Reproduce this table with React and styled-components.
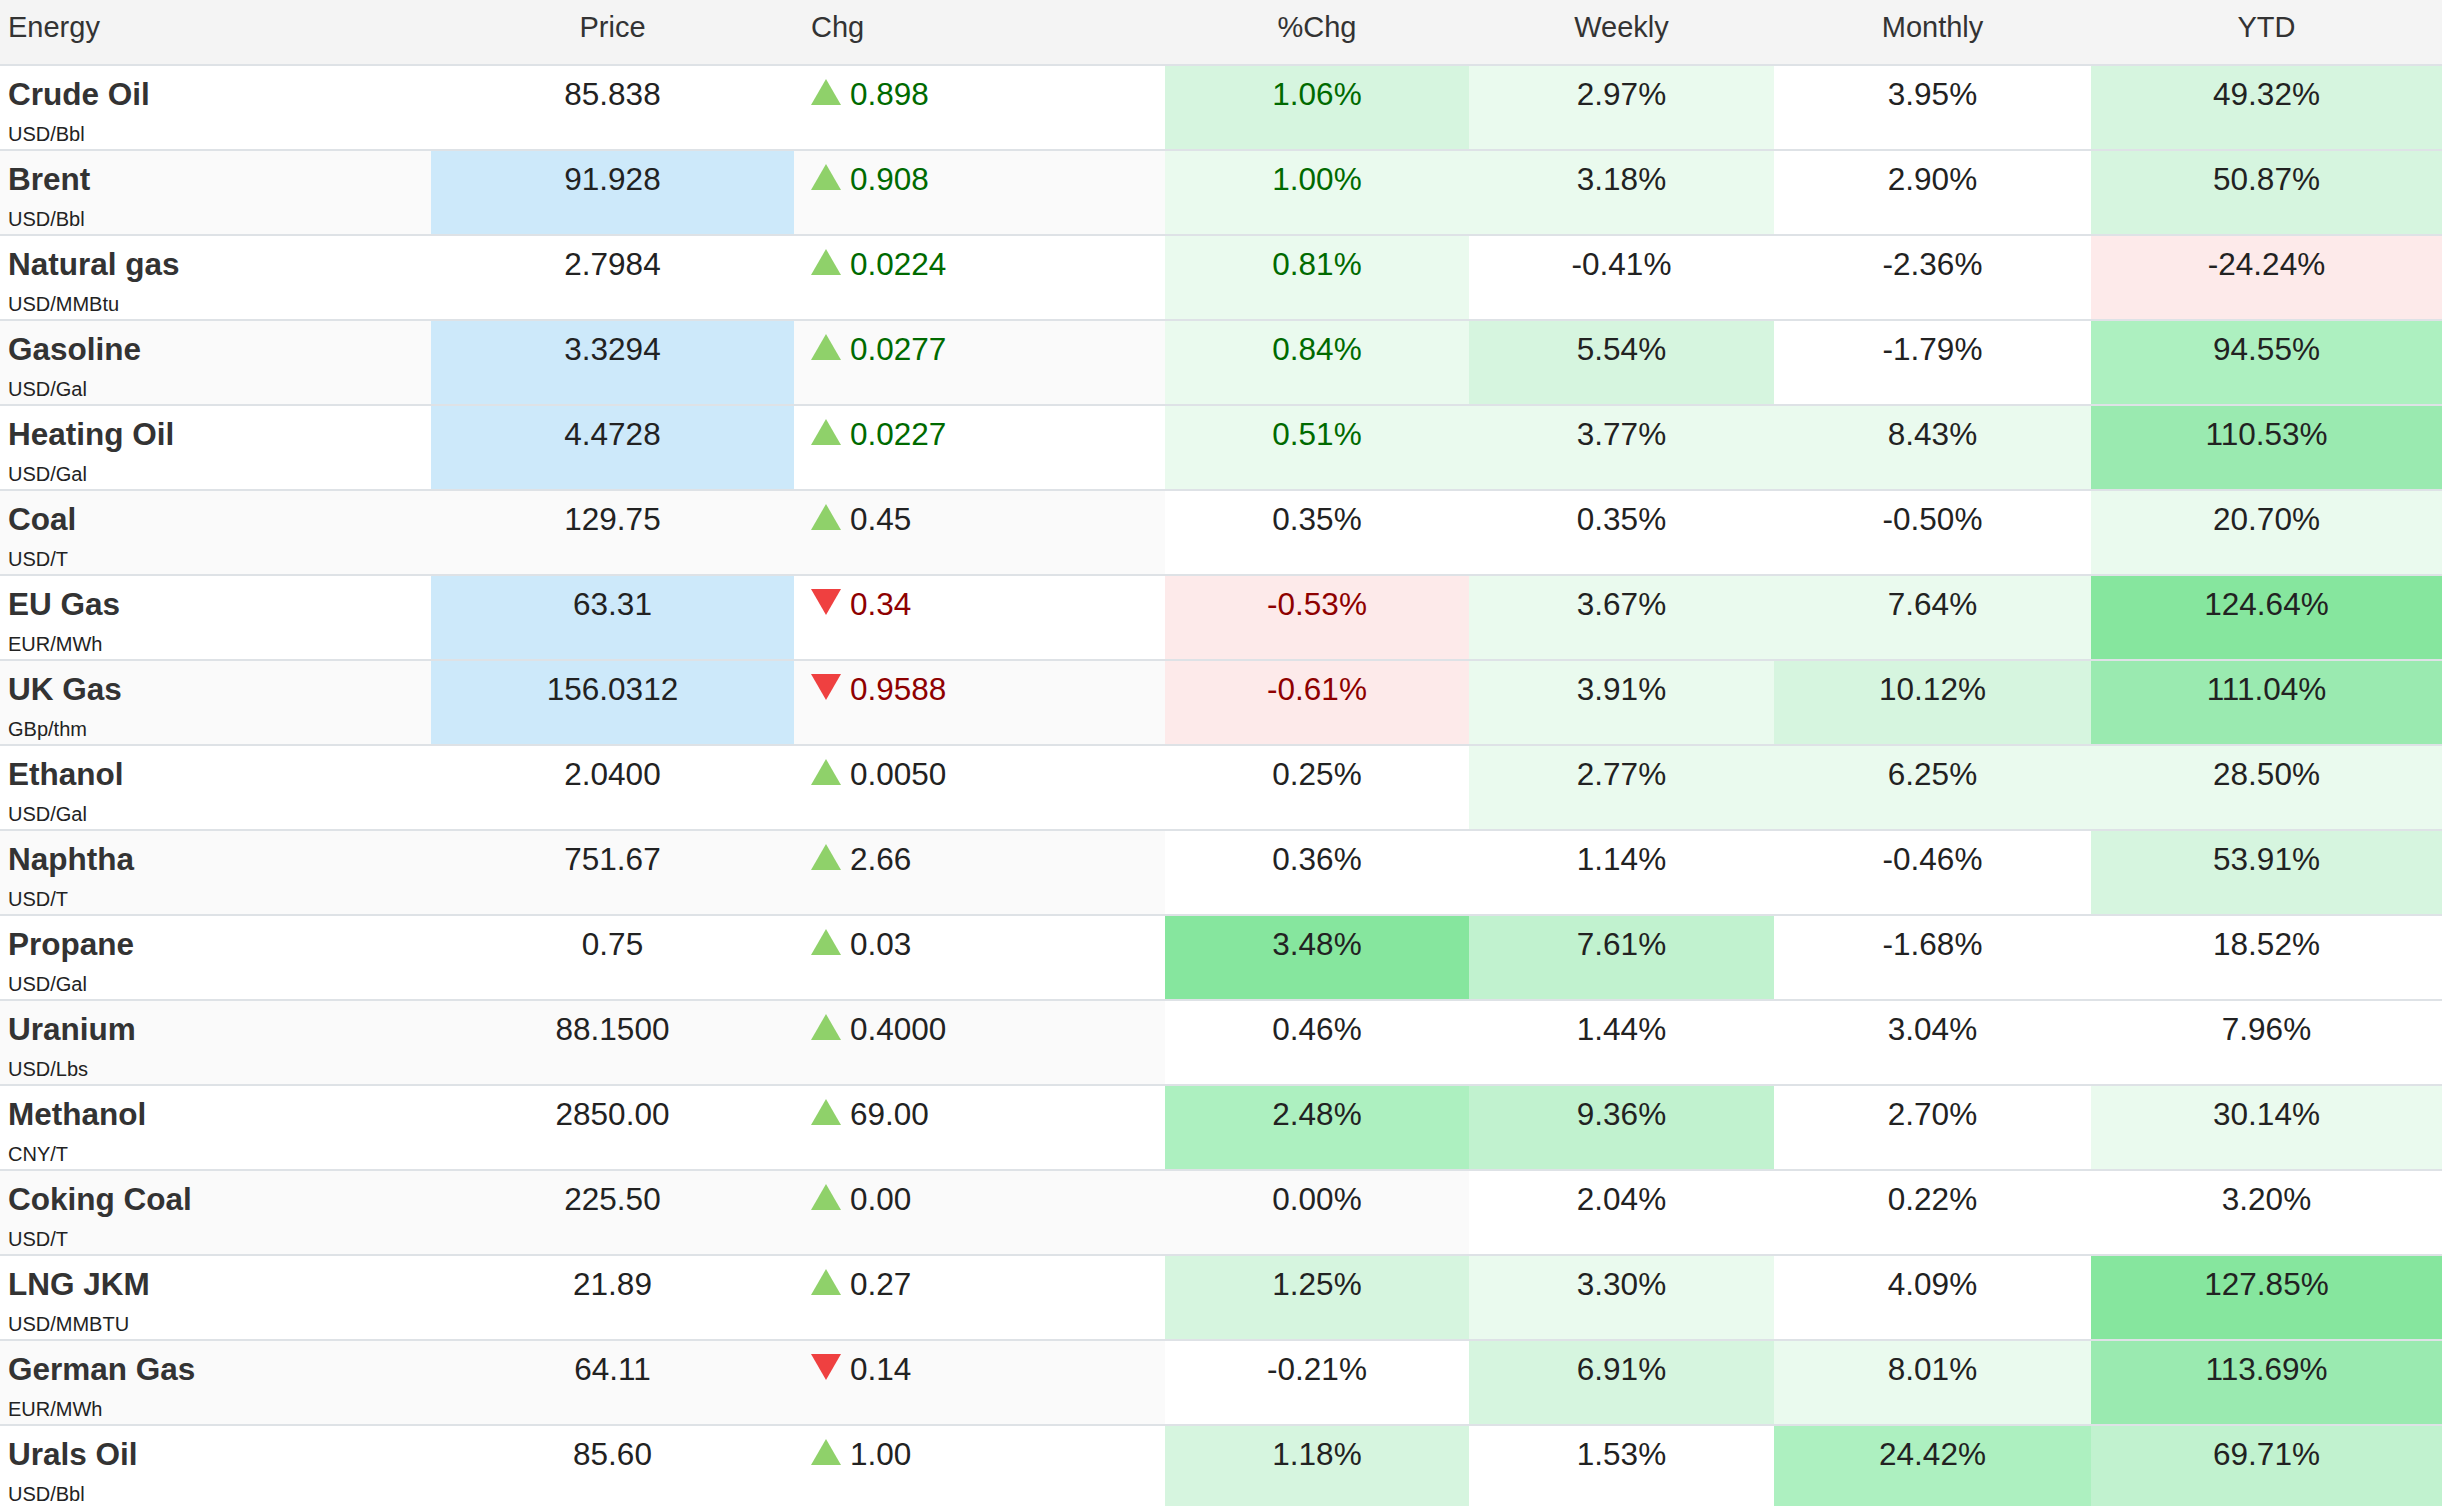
import React from 'react';
import styled, { createGlobalStyle } from 'styled-components';

const GlobalStyle = createGlobalStyle`
  html, body { margin: 0; padding: 0; background: #ffffff; }
  body { font-family: "Liberation Sans", Arial, Helvetica, sans-serif; color: #222; }
`;

const COLS = '431px 363px 371px 304px 305px 317px 1fr';

const HEAT = {
  w: '#ffffff',
  z: 'transparent',
  g0: '#eafaee',
  g1: '#d6f5df',
  g2: '#c1f2cf',
  g3: '#adf0c0',
  g4: '#9aeab0',
  g5: '#86e69e',
  r: '#fdeaea',
};

const Table = styled.div`
  width: 100%;
  font-family: "Liberation Sans", Arial, Helvetica, sans-serif;
`;

const HeaderRow = styled.div`
  display: grid;
  grid-template-columns: ${COLS};
  height: 64px;
  background: #f4f4f4;
  border-bottom: 2px solid #dee2e6;
`;

const HeadCell = styled.div`
  padding: 10px 8px 0 ${p => (p.$indent ? '17px' : '8px')};
  font-size: 29px;
  line-height: 34px;
  color: #333;
  text-align: ${p => p.$align || 'center'};
  white-space: nowrap;
`;

const Row = styled.div`
  display: grid;
  grid-template-columns: ${COLS};
  height: 83px;
  background: ${p => (p.$even ? '#fafafa' : '#ffffff')};
  border-bottom: 2px solid #dee2e6;
`;

const NameCell = styled.div`
  padding: 10px 8px 0 8px;
`;

const Name = styled.div`
  font-size: 31.5px;
  line-height: 37px;
  font-weight: 700;
  color: #333;
  white-space: nowrap;
`;

const Unit = styled.div`
  margin-top: 9px;
  font-size: 20px;
  line-height: 24px;
  color: #222;
  white-space: nowrap;
`;

const PriceCell = styled.div`
  padding: 10px 8px 0;
  font-size: 31.5px;
  line-height: 37px;
  text-align: center;
  color: #222;
  background: ${p => (p.$hl ? '#cde9fa' : 'transparent')};
`;

const ChgCell = styled.div`
  display: flex;
  align-items: flex-start;
  gap: 9px;
  padding: 10px 8px 0 17px;
`;

const ChgText = styled.span`
  font-size: 31.5px;
  line-height: 37px;
  color: ${p => p.$color};
`;

const Arrow = styled.svg`
  display: block;
  flex: none;
  margin-top: 3px;
  width: 30px;
  height: 26px;
`;

const HeatCell = styled.div`
  padding: 10px 8px 0;
  font-size: 31.5px;
  line-height: 37px;
  text-align: center;
  color: ${p => p.$color};
  background: ${p => HEAT[p.$heat] || '#ffffff'};
`;

const GREEN_TEXT = '#006a00';
const RED_TEXT = '#8e0000';
const DARK = '#222';

const rows = [
  ['Crude Oil', 'USD/Bbl', '85.838', 0, 1, '0.898', 1, ['1.06%', 'g1'], ['2.97%', 'g0'], ['3.95%', 'w'], ['49.32%', 'g1']],
  ['Brent', 'USD/Bbl', '91.928', 1, 1, '0.908', 1, ['1.00%', 'g0'], ['3.18%', 'g0'], ['2.90%', 'w'], ['50.87%', 'g1']],
  ['Natural gas', 'USD/MMBtu', '2.7984', 0, 1, '0.0224', 1, ['0.81%', 'g0'], ['-0.41%', 'w'], ['-2.36%', 'w'], ['-24.24%', 'r']],
  ['Gasoline', 'USD/Gal', '3.3294', 1, 1, '0.0277', 1, ['0.84%', 'g0'], ['5.54%', 'g1'], ['-1.79%', 'w'], ['94.55%', 'g3']],
  ['Heating Oil', 'USD/Gal', '4.4728', 1, 1, '0.0227', 1, ['0.51%', 'g0'], ['3.77%', 'g0'], ['8.43%', 'g0'], ['110.53%', 'g4']],
  ['Coal', 'USD/T', '129.75', 0, 1, '0.45', 0, ['0.35%', 'w'], ['0.35%', 'w'], ['-0.50%', 'w'], ['20.70%', 'g0']],
  ['EU Gas', 'EUR/MWh', '63.31', 1, 0, '0.34', 1, ['-0.53%', 'r'], ['3.67%', 'g0'], ['7.64%', 'g0'], ['124.64%', 'g5']],
  ['UK Gas', 'GBp/thm', '156.0312', 1, 0, '0.9588', 1, ['-0.61%', 'r'], ['3.91%', 'g0'], ['10.12%', 'g1'], ['111.04%', 'g4']],
  ['Ethanol', 'USD/Gal', '2.0400', 0, 1, '0.0050', 0, ['0.25%', 'w'], ['2.77%', 'g0'], ['6.25%', 'g0'], ['28.50%', 'g0']],
  ['Naphtha', 'USD/T', '751.67', 0, 1, '2.66', 0, ['0.36%', 'w'], ['1.14%', 'w'], ['-0.46%', 'w'], ['53.91%', 'g1']],
  ['Propane', 'USD/Gal', '0.75', 0, 1, '0.03', 0, ['3.48%', 'g5'], ['7.61%', 'g2'], ['-1.68%', 'w'], ['18.52%', 'w']],
  ['Uranium', 'USD/Lbs', '88.1500', 0, 1, '0.4000', 0, ['0.46%', 'w'], ['1.44%', 'w'], ['3.04%', 'w'], ['7.96%', 'w']],
  ['Methanol', 'CNY/T', '2850.00', 0, 1, '69.00', 0, ['2.48%', 'g3'], ['9.36%', 'g2'], ['2.70%', 'w'], ['30.14%', 'g0']],
  ['Coking Coal', 'USD/T', '225.50', 0, 1, '0.00', 0, ['0.00%', 'z'], ['2.04%', 'w'], ['0.22%', 'w'], ['3.20%', 'w']],
  ['LNG JKM', 'USD/MMBTU', '21.89', 0, 1, '0.27', 0, ['1.25%', 'g1'], ['3.30%', 'g0'], ['4.09%', 'w'], ['127.85%', 'g5']],
  ['German Gas', 'EUR/MWh', '64.11', 0, 0, '0.14', 0, ['-0.21%', 'w'], ['6.91%', 'g1'], ['8.01%', 'g0'], ['113.69%', 'g4']],
  ['Urals Oil', 'USD/Bbl', '85.60', 0, 1, '1.00', 0, ['1.18%', 'g1'], ['1.53%', 'w'], ['24.42%', 'g3'], ['69.71%', 'g2']],
].map(r => ({
  name: r[0], unit: r[1], price: r[2], hl: !!r[3], up: !!r[4], chg: r[5], live: !!r[6],
  pct: r[7], wk: r[8], mo: r[9], ytd: r[10],
}));

function TriangleUp() {
  return (
    <Arrow viewBox="0 0 30 26" aria-hidden="true">
      <polygon points="15,0 30,26 0,26" fill="#8fd16a" />
    </Arrow>
  );
}

function TriangleDown() {
  return (
    <Arrow viewBox="0 0 30 26" aria-hidden="true">
      <polygon points="0,0 30,0 15,26" fill="#ef4040" />
    </Arrow>
  );
}

export default function App() {
  return (
    <>
      <GlobalStyle />
      <Table>
        <HeaderRow>
          <HeadCell $align="left">Energy</HeadCell>
          <HeadCell>Price</HeadCell>
          <HeadCell $align="left" $indent>Chg</HeadCell>
          <HeadCell>%Chg</HeadCell>
          <HeadCell>Weekly</HeadCell>
          <HeadCell>Monthly</HeadCell>
          <HeadCell>YTD</HeadCell>
        </HeaderRow>
        {rows.map((r, i) => {
          const liveColor = r.live ? (r.up ? GREEN_TEXT : RED_TEXT) : DARK;
          return (
            <Row key={r.name} $even={i % 2 === 1}>
              <NameCell>
                <Name>{r.name}</Name>
                <Unit>{r.unit}</Unit>
              </NameCell>
              <PriceCell $hl={r.hl}>{r.price}</PriceCell>
              <ChgCell>
                {r.up ? <TriangleUp /> : <TriangleDown />}
                <ChgText $color={liveColor}>{r.chg}</ChgText>
              </ChgCell>
              <HeatCell $heat={r.pct[1]} $color={liveColor}>{r.pct[0]}</HeatCell>
              <HeatCell $heat={r.wk[1]} $color={DARK}>{r.wk[0]}</HeatCell>
              <HeatCell $heat={r.mo[1]} $color={DARK}>{r.mo[0]}</HeatCell>
              <HeatCell $heat={r.ytd[1]} $color={DARK}>{r.ytd[0]}</HeatCell>
            </Row>
          );
        })}
      </Table>
    </>
  );
}
